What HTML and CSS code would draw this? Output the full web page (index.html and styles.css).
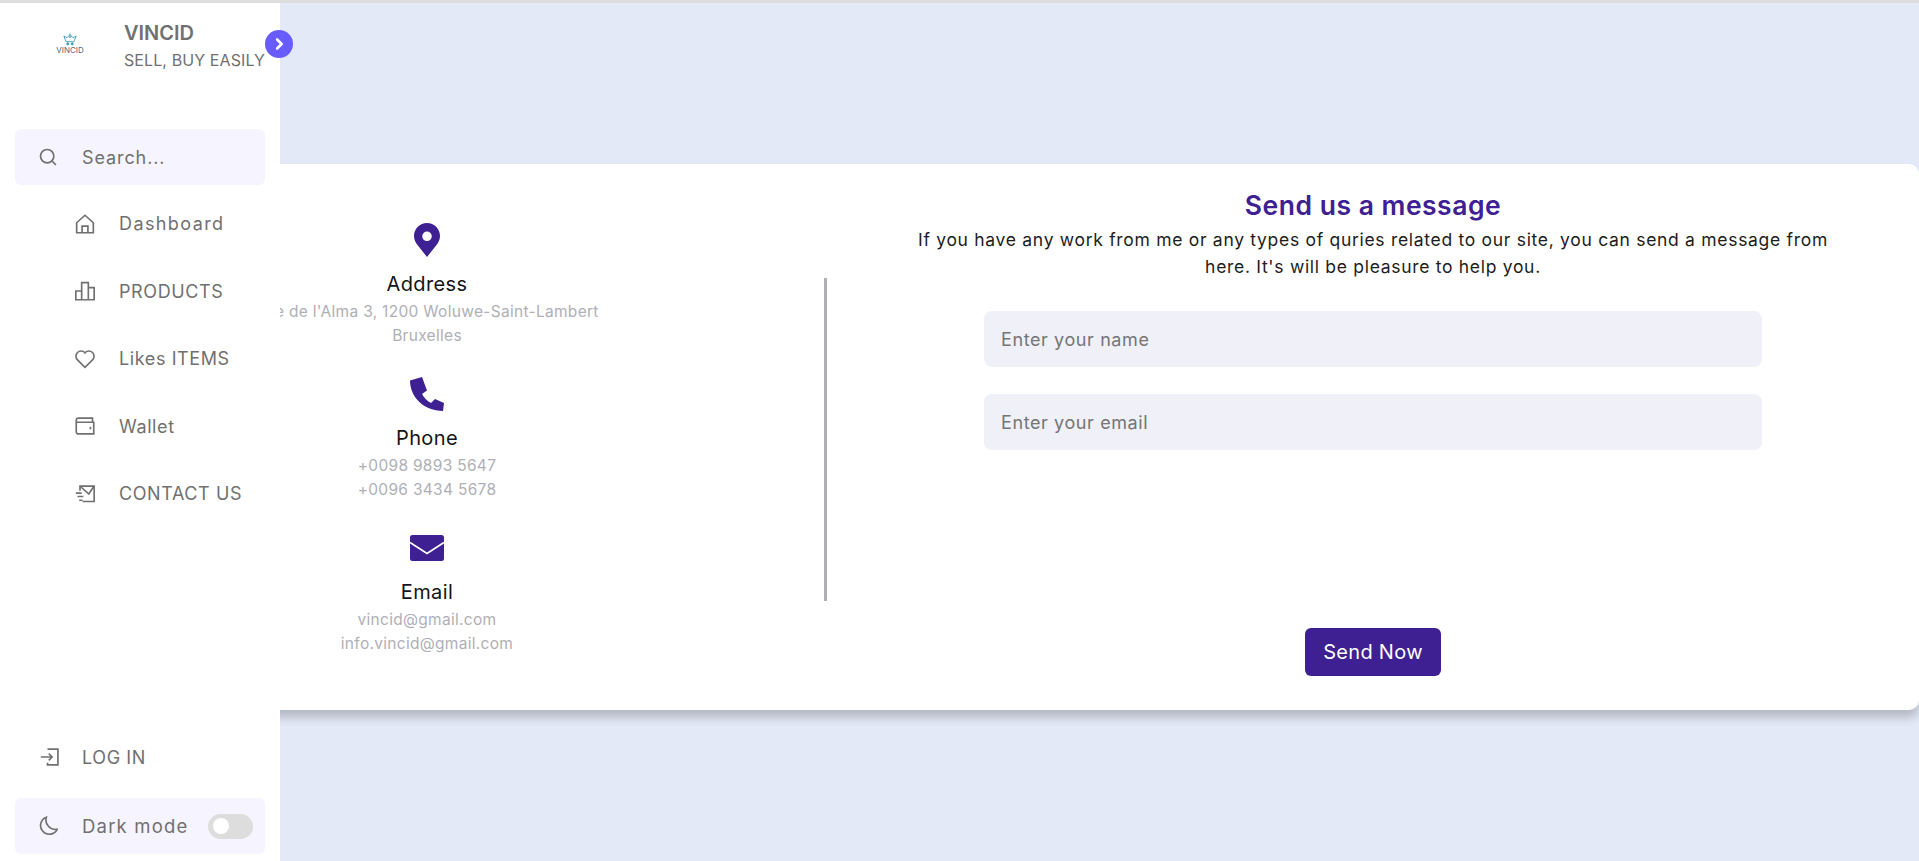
FILE: index.html
```html
<!DOCTYPE html>
<html lang="en">
<head>
    <meta charset="UTF-8">
    <meta name="viewport" content="width=device-width, initial-scale=1.0">
    <title>Contact us</title>
    <link rel="stylesheet" href="styles.css">
</head>
<body>
    <nav class="sidebar">
        <header class="brand">
            <div class="brand-logo">
                <svg class="logo-cart" viewBox="0 0 16 14" width="14" height="13" fill="none" stroke="#3a97b2" stroke-width="1">
                    <path d="M1 3l2.500 6.500h9L15 3l-3.500 2L8 1.500 4.500 5z"/>
                    <path d="M8 0v5M6.500 3.500L8 5l1.500-1.500"/>
                    <circle cx="5.500" cy="12" r="1.200" fill="#3a97b2"/>
                    <circle cx="10.500" cy="12" r="1.200" fill="#3a97b2"/>
                </svg>
                <span class="logo-word">VINCID</span>
            </div>
            <div class="brand-text">
                <span class="brand-name">VINCID</span>
                <span class="brand-tag">SELL, BUY EASILY</span>
            </div>
        </header>
        <span class="toggle-btn">
            <svg viewBox="0 0 24 24" width="18" height="18" fill="none" stroke="#fff" stroke-width="3.600" stroke-linecap="round" stroke-linejoin="round"><path d="M9.500 6l6 6-6 6"/></svg>
        </span>

        <div class="search-box">
            <svg class="side-icon" viewBox="0 0 24 24"><circle cx="11" cy="11" r="8"/><path d="M16.800 16.800L21.500 21.500"/></svg>
            <span>Search...</span>
        </div>

        <ul class="menu">
            <li class="item-wide">
                <svg class="side-icon" viewBox="0 0 24 24"><path d="M2 22.500V10.500L12 1.500l10 9v12z"/><path d="M8.500 22.500v-8h7v8"/></svg>
                Dashboard
            </li>
            <li>
                <svg class="side-icon" viewBox="0 0 24 24"><path d="M1 22.500V12h7v10.500zM8 22.500V2h8v20.500zM16 22.500V8h7v14.500z"/></svg>
                PRODUCTS
            </li>
            <li>
                <svg class="side-icon" viewBox="0 0 24 24"><path d="M12 22L3 13a6.200 6.200 0 0 1 0-8.800 6.200 6.200 0 0 1 8.700 0l.3.400.3-.4a6.200 6.200 0 0 1 8.700 0 6.200 6.200 0 0 1 0 8.800z"/></svg>
                Likes ITEMS
            </li>
            <li>
                <svg class="side-icon" viewBox="0 0 24 24"><path d="M21 7.500V2.500H4a2.500 2.500 0 0 0-2.500 2.500V19A2.500 2.500 0 0 0 4 21.500h18.500V7.500H2"/><path d="M18.500 13v3"/></svg>
                Wallet
            </li>
            <li>
                <svg class="side-icon" viewBox="0 0 24 24"><path d="M6 8V2.500h17V21H9"/><path d="M6.500 3l10 9 6-9"/><path d="M1 11h7M3 15h7M5 19.500h4"/></svg>
                CONTACT US
            </li>
        </ul>

        <div class="side-bottom">
            <div class="login-row">
                <svg class="side-icon" viewBox="0 0 24 24"><path d="M9 2.500h12.500v19H9v-2.500"/><path d="M1 12h13M10.500 8l4 4-4 4"/></svg>
                LOG IN
            </div>
            <div class="dark-row">
                <svg class="side-icon" viewBox="0 0 24 24"><path d="M10 1.500A10.500 10.500 0 1 0 23 16 11.500 11.500 0 0 1 10 1.500z"/></svg>
                <span class="dark-label">Dark mode</span>
                <span class="switch"><span class="switch-knob"></span></span>
            </div>
        </div>
    </nav>

    <main class="page">
        <section class="contact-card">
            <div class="details">
                <div class="detail">
                    <svg class="detail-icon" viewBox="0 0 26 34" width="26" height="34">
                        <path fill-rule="evenodd" d="M13 0C5.800 0 0 5.800 0 13c0 3.500 1.400 6.300 3.500 9L13 34l9.500-12c2.100-2.700 3.500-5.500 3.500-9C26 5.800 20.200 0 13 0zm0 8.500a4.800 4.800 0 1 1 0 9.600 4.800 4.800 0 0 1 0-9.600z"/>
                    </svg>
                    <h3>Address</h3>
                    <p>Rue de l'Alma 3, 1200 Woluwe-Saint-Lambert</p>
                    <p>Bruxelles</p>
                </div>
                <div class="detail">
                    <svg class="detail-icon" viewBox="0 0 34 34" width="34" height="34">
                        <path d="M0 3.500L12 0l5 13.500-5 3.500c1.800 3.500 5 7 9 9l4-4 9 4-1 8C14 34 0 20 0 3.500z"/>
                    </svg>
                    <h3>Phone</h3>
                    <p>+0098 9893 5647</p>
                    <p>+0096 3434 5678</p>
                </div>
                <div class="detail">
                    <svg class="detail-icon" viewBox="0 -4 34 34" width="34" height="34">
                        <path d="M2.500 0h29A2.500 2.500 0 0 1 34 2.500v21a2.500 2.500 0 0 1-2.500 2.500h-29A2.500 2.500 0 0 1 0 23.500v-21A2.500 2.500 0 0 1 2.500 0z"/>
                        <path d="M0 7.500l17 11 17-11" fill="none" stroke="#fff" stroke-width="1.800"/>
                    </svg>
                    <h3>Email</h3>
                    <p>vincid@gmail.com</p>
                    <p>info.vincid@gmail.com</p>
                </div>
            </div>

            <div class="divider"></div>

            <form class="message-form">
                <h2>Send us a message</h2>
                <p class="intro">If you have any work from me or any types of quries related to our site, you can send a message from<br>here. It's will be pleasure to help you.</p>
                <input class="field" type="text" placeholder="Enter your name">
                <input class="field" type="text" placeholder="Enter your email">
                <button class="send-btn" type="button">Send Now</button>
            </form>
        </section>
    </main>
</body>
</html>
```

FILE: styles.css
```css
* {
    box-sizing: border-box;
}

body {
    margin: 0;
    height: 861px;
    overflow: hidden;
    background-color: #e3e9f7;
    border-top: 3px solid #dddddd;
    font-family: "Inter", "Open Sans", sans-serif;
}

/* sidebar */
.sidebar {
    position: fixed;
    top: 3px;
    left: 0;
    bottom: 0;
    width: 280px;
    z-index: 10;
    background-color: #fff;
    color: #707070;
    display: flex;
    flex-direction: column;
    padding: 0 15px 7px;
}

.brand {
    display: flex;
    height: 126px;
    padding-top: 15px;
}

.brand-logo {
    width: 109px;
    display: flex;
    flex-direction: column;
    align-items: center;
    padding: 15px 39px 0 40px;
}

.logo-word {
    font-size: 8px;
    line-height: 9px;
    color: #5d5f76;
}

.brand-text {
    display: flex;
    flex-direction: column;
    white-space: nowrap;
}

.brand-name {
    font-size: 20px;
    font-weight: 600;
    line-height: 30px;
}

.brand-tag {
    font-size: 16px;
    line-height: 24px;
    letter-spacing: 0.1px;
}

.toggle-btn {
    position: absolute;
    top: 27px;
    left: 265px;
    width: 28px;
    height: 28px;
    border-radius: 50%;
    background-color: #695cfe;
    display: flex;
    align-items: center;
    justify-content: center;
}

.side-icon {
    width: 20px;
    height: 20px;
    flex-shrink: 0;
    fill: none;
    stroke: #707070;
    stroke-width: 2;
}

.search-box {
    height: 56px;
    display: flex;
    align-items: center;
    gap: 24px;
    padding-left: 23px;
    border-radius: 6px;
    background-color: #f6f5ff;
    font-size: 18px;
    letter-spacing: 0.9px;
}

.menu {
    list-style: none;
    margin: 5px 0 0;
    padding: 0;
}

.menu li {
    height: 67.500px;
    display: flex;
    align-items: center;
    gap: 24px;
    padding-left: 60px;
    font-size: 18px;
    letter-spacing: 0.6px;
    white-space: nowrap;
}

.menu .item-wide {
    letter-spacing: 1.400px;
}

.side-bottom {
    margin-top: auto;
}

.login-row {
    height: 56px;
    display: flex;
    align-items: center;
    gap: 22px;
    padding-left: 25px;
    font-size: 18px;
    letter-spacing: 0.6px;
}

.dark-row {
    height: 56px;
    margin-top: 13px;
    display: flex;
    align-items: center;
    padding-left: 23px;
    border-radius: 6px;
    background-color: #f6f5ff;
    font-size: 18.500px;
    letter-spacing: 1.200px;
}

.dark-label {
    margin-left: 24px;
    white-space: nowrap;
}

.switch {
    margin-left: auto;
    margin-right: 12px;
    width: 45px;
    height: 25px;
    border-radius: 13px;
    background-color: #dddddd;
    display: flex;
    align-items: center;
    padding-left: 5px;
}

.switch-knob {
    width: 16px;
    height: 16px;
    border-radius: 50%;
    background-color: #fff;
}

/* main card */
.page {
    padding: 161px 0 0 28px;
}

.contact-card {
    height: 546px;
    display: flex;
    align-items: center;
    background-color: #fff;
    border-radius: 10px;
    box-shadow: 0 8px 10px rgba(0, 0, 0, 0.2);
}

.details {
    width: 796px;
    align-self: stretch;
    padding: 59px 0 0 2px;
    display: flex;
    flex-direction: column;
    align-items: center;
    gap: 30px;
}

.detail {
    display: flex;
    flex-direction: column;
    align-items: center;
}

.detail-icon {
    fill: #3e2093;
}

.detail h3 {
    margin: 12px 0 1px;
    font-size: 20px;
    font-weight: 400;
    line-height: 30px;
    letter-spacing: 0.4px;
    color: #141414;
}

.detail p {
    margin: 0;
    font-size: 15.500px;
    line-height: 23.500px;
    letter-spacing: 0.3px;
    color: #afafb6;
    white-space: nowrap;
}

.divider {
    width: 3px;
    height: 323px;
    margin-top: 5px;
    background-color: #afafb6;
}

.message-form {
    flex: 1;
    align-self: stretch;
    display: flex;
    flex-direction: column;
    align-items: center;
    padding-top: 22px;
}

.message-form h2 {
    margin: 0 0 2px;
    font-size: 26.500px;
    font-weight: 600;
    line-height: 38px;
    letter-spacing: 0.5px;
    color: #3e2093;
}

.intro {
    margin: 0;
    font-size: 17.500px;
    line-height: 27px;
    letter-spacing: 0.700px;
    text-align: center;
    color: #1c1c1c;
    white-space: nowrap;
}

.field {
    width: 778px;
    height: 56px;
    margin-top: 27px;
    padding: 0 17px;
    border: none;
    border-radius: 8px;
    background-color: #eff0f8;
    font-family: inherit;
    font-size: 18px;
    letter-spacing: 0.6px;
}

.field:first-of-type {
    margin-top: 31px;
}

.field::placeholder {
    color: #757575;
}

.send-btn {
    width: 136px;
    height: 48px;
    margin-top: 178px;
    border: none;
    border-radius: 6px;
    background-color: #3e2093;
    color: #fff;
    font-family: inherit;
    font-size: 20px;
    letter-spacing: 0.3px;
}
```
